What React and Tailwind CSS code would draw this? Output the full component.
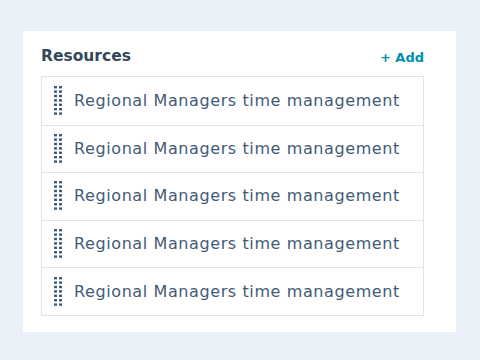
import React from 'react';

const items = [
  'Regional Managers time management',
  'Regional Managers time management',
  'Regional Managers time management',
  'Regional Managers time management',
  'Regional Managers time management',
];

const DragHandle = () => (
  <svg width="8" height="30" viewBox="0 0 8 30" className="shrink-0">
    {[0, 1, 2, 3, 4, 5, 6].map(r =>
      [0, 1].map(c => (
        <rect key={`${r}-${c}`} x={c * 5} y={r * 4.4} width="3" height="2.4" fill="#425b76" />
      ))
    )}
  </svg>
);

export default function App() {
  return (
    <div className="w-[480px] h-[360px] bg-[#eaf0f8] pt-[31px] pl-[23px]" style={{ fontFamily: '"DejaVu Sans", sans-serif' }}>
      <div className="w-[433px] h-[301px] bg-white pl-[18px] pr-[32px]">
        <div className="flex items-end justify-between h-[45px] pb-[12px]">
          <span className="text-[15.5px] font-bold text-[#33475b] leading-none">Resources</span>
          <span className="text-[13px] font-bold text-[#0091ae] leading-none">+ Add</span>
        </div>
        <div className="border border-[#dfe3eb]">
          {items.map((t, i) => (
            <div key={i} className={`flex items-center h-[47.6px] pl-[12px] gap-[12px] ${i > 0 ? 'border-t border-[#dfe3eb]' : ''}`}>
              <DragHandle />
              <span className="text-[16px] tracking-[0.6px] text-[#425b76]">{t}</span>
            </div>
          ))}
        </div>
      </div>
    </div>
  );
}
